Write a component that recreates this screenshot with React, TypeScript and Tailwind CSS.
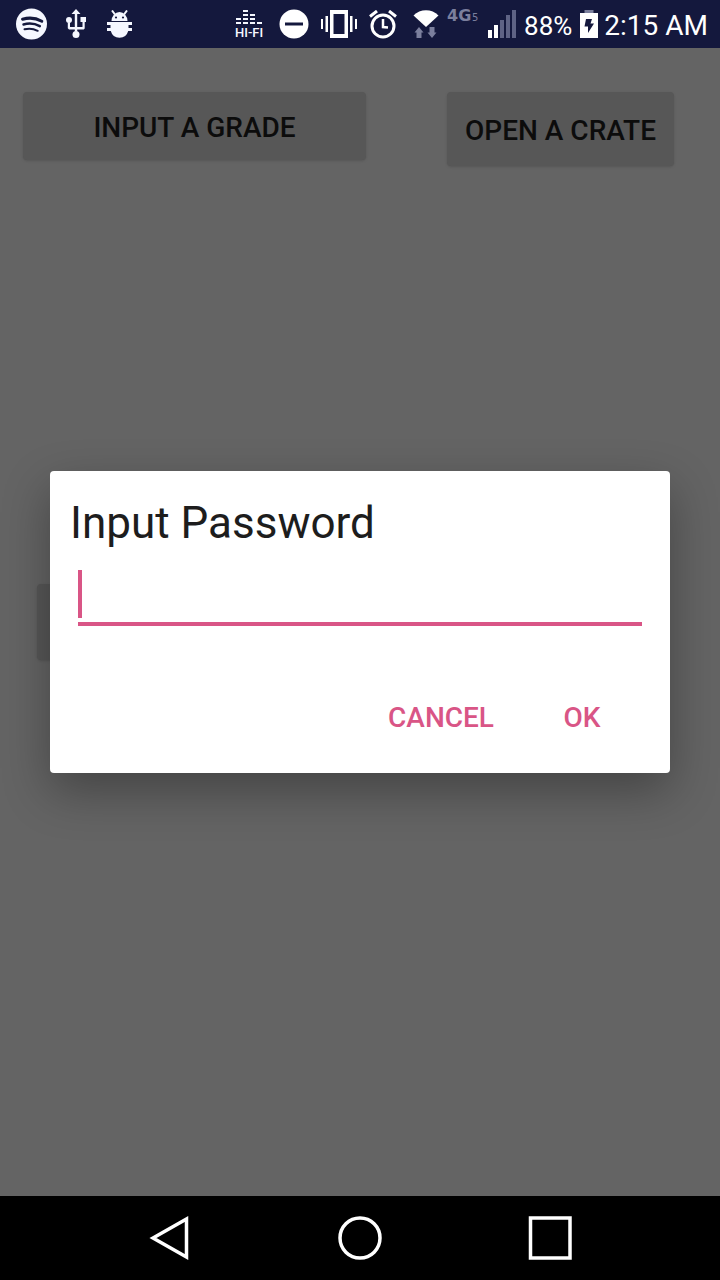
import React, { useState } from 'react';

const SpotifyIcon = () => (
  <svg width="32" height="32" viewBox="0 0 32 32" fill="none">
    <circle cx="15.500" cy="16" r="15.500" fill="#f5f7ff" />
    <g stroke="#14183d" strokeLinecap="round">
      <path d="M6.500 11.200c6.500-1.800 13.500-1.200 19.300 2" strokeWidth="3" />
      <path d="M7.500 16.500c5.500-1.500 11.500-.9 16.300 1.700" strokeWidth="2.500" />
      <path d="M8.500 21.300c4.500-1.200 9-.7 13.200 1.500" strokeWidth="2" />
    </g>
  </svg>
);

const UsbIcon = () => (
  <svg width="22" height="30" viewBox="0 0 22 30" fill="#f5f7ff">
    <path d="M10 0l4.500 5h-3.300v13h5.300v-5H14.500V8h5.500v5h-1.300v6.500l-1 1h-6.500v2h-2.400v-2H3l-1.200-1.200V13.500h2.200V18h4.800V5H5.500z" />
    <circle cx="3" cy="11" r="3" />
    <circle cx="10" cy="25.500" r="3.500" />
  </svg>
);

const BugIcon = () => (
  <svg width="27" height="28" viewBox="0 0 27 28" fill="#f5f7ff">
    <g transform="translate(1 0)">
      <path d="M5 0.500l3 4M20 0.500l-3 4" stroke="#f5f7ff" strokeWidth="2" />
      <path d="M4.500 11a8 9 0 0 1 16 0z" />
      <path d="M0 12h25v3h-3.500v3H25v3h-3.800a9 9 0 0 1-17.400 0H0v-3h3.500v-3H0z" />
      <circle cx="9" cy="7.500" r="1.100" fill="#14183d" />
      <circle cx="16" cy="7.500" r="1.100" fill="#14183d" />
    </g>
  </svg>
);

const HifiIcon = () => (
  <svg width="32" height="32" viewBox="0 -2 32 32" fill="#f5f7ff">
    <path d="M8 0h5v2H8zM8 4h5v2H8zM8 8h5v2H8zM8 12h5v2H8zM1 8h5v2H1zM1 12h5v2H1zM15 4h5v2h-5zM15 8h5v2h-5zM15 12h5v2h-5zM22 12h5v2h-5z" />
    <text x="0" y="27" fontFamily="Roboto, sans-serif" fontSize="13" fontWeight="500">HI-FI</text>
  </svg>
);

const DoNotDisturbIcon = () => (
  <svg width="30" height="30" viewBox="0 0 30 30">
    <circle cx="15" cy="15" r="14.500" fill="#ffffff" />
    <path d="M6 13.500h18v3H6z" fill="#14183d" />
  </svg>
);

const VibrateIcon = () => (
  <svg width="36" height="28" viewBox="0 0 36 28" fill="#ffffff">
    <path d="M9 0h18v28H9zM12.500 4v20h11V4z" fillRule="evenodd" />
    <path d="M0 9h2v10H0zM4.500 6h2.500v16H4.500zM29 6h2.500v16H29zM34 9h2v10h-2z" />
  </svg>
);

const AlarmIcon = () => (
  <svg width="28" height="29" viewBox="0 0 28 29" fill="none" stroke="#ffffff">
    <circle cx="14" cy="16" r="11" strokeWidth="3" />
    <path d="M14 9v8l5 0.500" strokeWidth="2.500" />
    <path d="M1 6.500l7-5.500M27 6.500L20 1" strokeWidth="3" />
  </svg>
);

const WifiIcon = () => (
  <svg width="26" height="28" viewBox="0 0 26 28">
    <path d="M0.500 5.500C7-1.500 19-1.500 25.500 5.500L13 17z" fill="#ffffff" />
    <path d="M6 17l4.500 5.500H8.500V28h-5v-5.500H1.500zM19 28l-4.500-5.500h2V17h5v5.500h2z" fill="#7b7f9d" />
  </svg>
);

const NetworkIcon = () => (
  <svg width="33" height="40" viewBox="0 -5 33 40" fill="#7b7f9d" fontFamily="DejaVu Sans, sans-serif">
    <text x="0" y="12" fontSize="16" fontWeight="700">4G</text>
    <text x="25" y="12" fontSize="10">5</text>
  </svg>
);

const SignalIcon = () => (
  <svg width="28" height="28" viewBox="0 0 28 28">
    <path d="M0 20h4v8H0zM6 15h4v13H6z" fill="#ffffff" />
    <path d="M12 10h4v18h-4zM18 5h4v23h-4zM24 0h4v28h-4z" fill="#5f6385" />
  </svg>
);

const BatteryIcon = () => (
  <svg width="18" height="28" viewBox="0 0 18 28">
    <path d="M4.500 0h9v3h-9z" fill="#7b7f9d" />
    <path d="M0 3h18v25H0z" fill="#ffffff" />
    <path d="M6 9h6l-1.500 4.500H14L8 23v-6.500H4.500z" fill="#14183d" />
  </svg>
);

const StatusBar = () => (
  <header className="flex h-12 items-center justify-between bg-[#14183d] pl-4 pr-3 text-white">
    <div className="flex items-center gap-[18px]">
      <SpotifyIcon />
      <UsbIcon />
      <BugIcon />
    </div>
    <div className="flex items-center">
      <div className="flex items-center gap-3">
        <HifiIcon />
        <DoNotDisturbIcon />
        <VibrateIcon />
        <AlarmIcon />
      </div>
      <div className="ml-4 flex items-center gap-2">
        <WifiIcon />
        <NetworkIcon />
        <SignalIcon />
        <span className="pt-1 text-[26px] leading-8">88%</span>
        <BatteryIcon />
      </div>
      <span className="ml-1.5 pt-1 text-[28px] leading-8">2:15 AM</span>
    </div>
  </header>
);

const NavigationBar = () => (
  <nav className="flex h-[84px] items-center justify-center gap-[146px] bg-black">
    <button type="button" aria-label="Back">
      <svg width="44" height="44" viewBox="0 0 44 44" fill="none" stroke="#ffffff" strokeWidth="3.500">
        <path d="M5 22L38.500 3v38z" />
      </svg>
    </button>
    <button type="button" aria-label="Home">
      <svg width="44" height="44" viewBox="0 0 44 44" fill="none" stroke="#ffffff" strokeWidth="3.500">
        <circle cx="22" cy="22" r="20" />
      </svg>
    </button>
    <button type="button" aria-label="Overview">
      <svg width="44" height="44" viewBox="0 0 44 44" fill="none" stroke="#ffffff" strokeWidth="3.500">
        <path d="M2.500 2h39.500v40h-39.500z" />
      </svg>
    </button>
  </nav>
);

const PasswordDialog = () => {
  const [password, setPassword] = useState<string>('');

  return (
    <form
      role="dialog"
      aria-labelledby="password-title"
      className="w-full rounded bg-white pt-[26px] pb-[19px] shadow-[0_18px_48px_rgba(0,0,0,0.32)]"
      onSubmit={(e) => e.preventDefault()}
    >
      <label id="password-title" htmlFor="password" className="block px-5 text-[44px] leading-[52px] text-[#1d1d1d]">
        Input Password
      </label>
      <div className="mx-7 mt-[21px] flex h-14 items-start border-b-4 border-[#d95586]">
        {password === '' && <span className="h-12 w-1 bg-[#d95586]" />}
        <input
          id="password"
          type="password"
          value={password}
          onChange={(e) => setPassword(e.target.value)}
          className="h-12 min-w-0 flex-1 text-4xl caret-[#d95586] outline-none"
        />
      </div>
      <div className="mt-14 flex justify-end gap-2 pr-6 text-[28px] font-medium text-[#d95586]">
        <button type="button" className="h-[72px] min-w-32 px-4">CANCEL</button>
        <button type="submit" className="h-[72px] min-w-32 px-4">OK</button>
      </div>
    </form>
  );
};

export default function App() {
  return (
    <div className="flex min-h-screen flex-col font-[Roboto,sans-serif]">
      <StatusBar />
      <main className="relative grid flex-1 grid-rows-[1fr_auto_1fr] bg-[#646464]">
        <div className="flex items-start justify-between pt-11 pr-[46px] pl-[23px] text-[28px] font-medium text-[#0c0c0c]">
          <button type="button" className="h-[68px] w-[343px] rounded bg-[#575757] pt-1 shadow-sm">
            INPUT A GRADE
          </button>
          <button type="button" className="h-[74px] rounded bg-[#575757] px-[18px] pt-1 shadow-sm">
            OPEN A CRATE
          </button>
        </div>
        <button type="button" disabled className="mr-14 ml-[37px] h-[76px] rounded bg-[#575757] shadow-sm" />
        <div className="absolute inset-0 flex items-center px-[50px]">
          <PasswordDialog />
        </div>
      </main>
      <NavigationBar />
    </div>
  );
}
